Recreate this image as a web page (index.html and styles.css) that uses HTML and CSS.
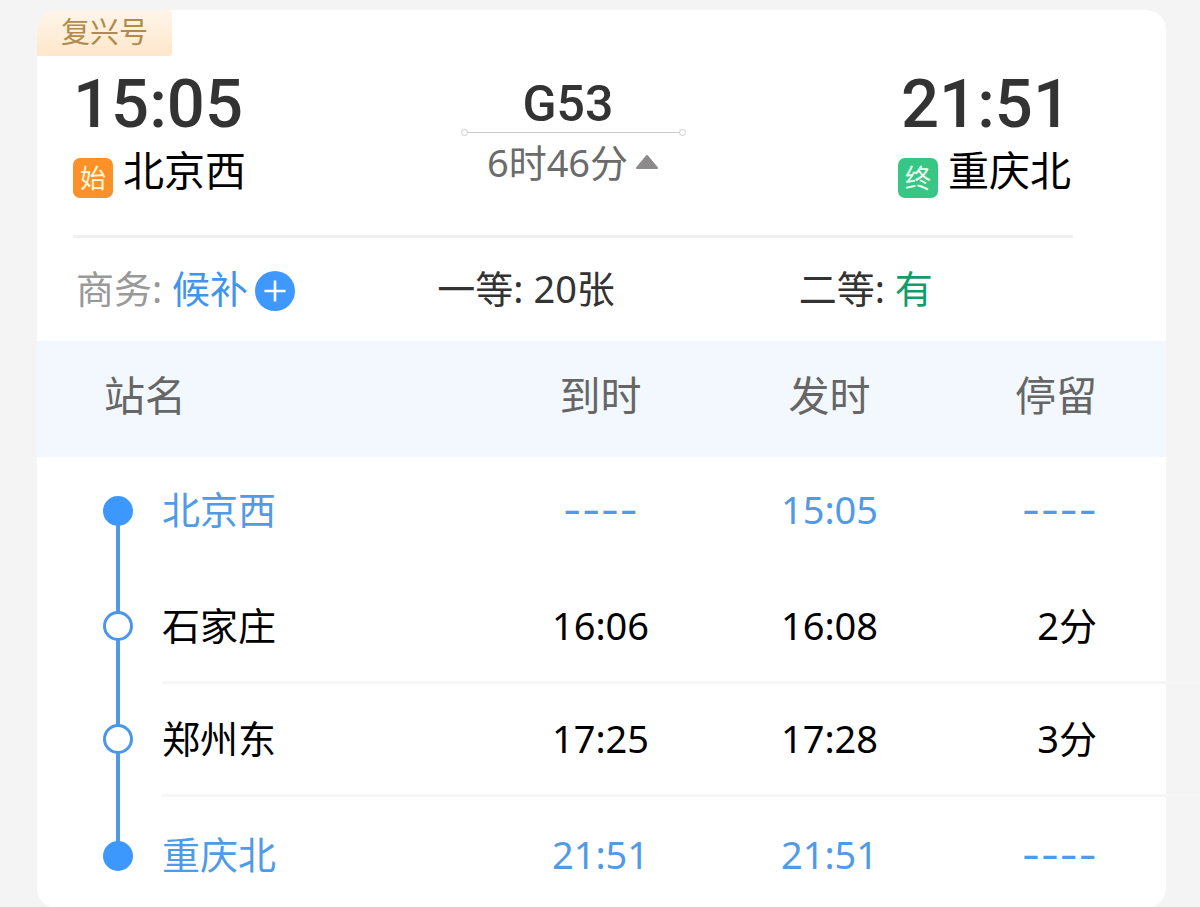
FILE: index.html
```html
<!DOCTYPE html>
<html lang="zh-CN">

<head>
    <meta charset="UTF-8">
    <meta name="viewport" content="width=device-width, initial-scale=1">
    <title>G53 北京西 - 重庆北</title>
    <link rel="stylesheet" href="styles.css">
</head>

<body>
    <div class="card">
        <div class="tag">复兴号</div>

        <!-- 车次信息 -->
        <div class="trip">
            <div class="end">
                <div class="time">15:05</div>
                <div class="station">
                    <span class="badge start">始</span>
                    <span class="city">北京西</span>
                </div>
            </div>
            <div class="middle">
                <div class="number">G53</div>
                <div class="rule"><i></i><b></b><i></i></div>
                <button class="duration" type="button" aria-expanded="true">
                    6时46分
                    <svg width="24" height="16" viewBox="0 0 24 16" aria-hidden="true">
                        <path d="M12 2 L22 14 H2 Z" fill="#8c8a8b" stroke="#8c8a8b" stroke-width="2" stroke-linejoin="round" />
                    </svg>
                </button>
            </div>
            <div class="end right">
                <div class="time">21:51</div>
                <div class="station">
                    <span class="badge final">终</span>
                    <span class="city">重庆北</span>
                </div>
            </div>
        </div>

        <!-- 余票 -->
        <div class="seats">
            <div class="seat none">
                <span>商务: <a class="wait" href="#">候补</a></span>
                <button class="add" type="button" aria-label="候补">
                    <svg width="40" height="40" viewBox="0 0 40 40" aria-hidden="true">
                        <circle cx="20" cy="20" r="20" fill="#3f98fe" />
                        <path d="M20 9.5 V30.5 M9.5 20 H30.5" stroke="#fff" stroke-width="2.6" />
                    </svg>
                </button>
            </div>
            <div class="seat">一等: 20张</div>
            <div class="seat"><span>二等: <span class="has">有</span></span></div>
        </div>

        <!-- 经停站 -->
        <table class="stops">
            <colgroup>
                <col class="col-rail">
                <col>
                <col class="col-time">
                <col class="col-time">
                <col class="col-stay">
            </colgroup>
            <thead>
                <tr>
                    <th class="name" colspan="2">站名</th>
                    <th>到时</th>
                    <th>发时</th>
                    <th class="stay">停留</th>
                </tr>
            </thead>
            <tbody>
                <tr class="first">
                    <td class="rail"><span class="dot"></span></td>
                    <td class="name">北京西</td>
                    <td><span class="dash">----</span></td>
                    <td>15:05</td>
                    <td class="stay"><span class="dash">----</span></td>
                </tr>
                <tr class="pass">
                    <td class="rail"><span class="dot"></span></td>
                    <td class="name">石家庄</td>
                    <td>16:06</td>
                    <td>16:08</td>
                    <td class="stay">2分</td>
                </tr>
                <tr class="pass">
                    <td class="rail"><span class="dot"></span></td>
                    <td class="name">郑州东</td>
                    <td>17:25</td>
                    <td>17:28</td>
                    <td class="stay">3分</td>
                </tr>
                <tr class="last">
                    <td class="rail"><span class="dot"></span></td>
                    <td class="name">重庆北</td>
                    <td>21:51</td>
                    <td>21:51</td>
                    <td class="stay"><span class="dash">----</span></td>
                </tr>
            </tbody>
        </table>
    </div>
</body>

</html>
```

FILE: styles.css
```css
* {
    padding: 0;
    margin: 0;
    box-sizing: border-box;
}

body {
    padding: 10px 34px 0 37px;
    background: #f4f4f4;
    color: #333;
    font-family: "Noto Sans", "Noto Sans CJK SC", sans-serif;
    font-size: 38px;
    line-height: 44px;
}

button {
    border: 0;
    background: none;
    font: inherit;
    color: inherit;
    cursor: pointer;
}

a {
    text-decoration: none;
}

svg {
    display: block;
}

.card {
    background: #fff;
    border-radius: 20px;
}

.tag {
    width: 135px;
    height: 46px;
    border-radius: 20px 4px 4px 0;
    background: linear-gradient(#fff5ea, #fee7ca);
    color: #b08a4e;
    font-size: 29px;
    text-align: center;
}

/* 车次信息 */
.trip {
    display: grid;
    grid-template-columns: 1fr 225px 1fr;
    margin: 0 93px 0 36px;
    padding: 15px 0 37px;
    border-bottom: 3px solid #f0f0f0;
}

.end {
    display: flex;
    flex-direction: column;
    align-items: flex-start;
    gap: 11px;
}

.right {
    align-items: flex-end;
    padding-right: 2px;
}

.time,
.number {
    font-family: Roboto, sans-serif;
    font-weight: 500;
}

.time {
    font-size: 67px;
    line-height: 66px;
}

.station {
    display: flex;
    gap: 10px;
    height: 50px;
}

.city {
    color: #000;
    font-size: 41px;
}

.badge {
    align-self: flex-end;
    width: 40px;
    height: 40px;
    border-radius: 7px;
    font-size: 26px;
    line-height: 40px;
    text-align: center;
}

.start {
    background: #fb9128;
    color: #fff6dc;
}

.final {
    background: #37c684;
    color: #f0fff4;
}

.middle {
    padding-top: 9px;
    text-align: center;
}

.number {
    padding-right: 10px;
    font-size: 50px;
    line-height: 48px;
}

.rule {
    display: flex;
    align-items: center;
    height: 8px;
}

.rule i {
    width: 7px;
    height: 7px;
    border: 1px solid #ccc;
    border-radius: 50%;
}

.rule b {
    flex: 1;
    height: 1px;
    background: #ccc;
}

.duration {
    display: flex;
    align-items: center;
    justify-content: center;
    gap: 7px;
    width: 100%;
    margin-top: 4px;
    color: #6b6b6b;
}

/* 余票 */
.seats {
    display: grid;
    grid-template-columns: repeat(3, 1fr);
    padding: 28px 6px 30px 39px;
}

.seat {
    display: flex;
    align-items: flex-start;
    gap: 7px;
}

.none {
    color: #999;
}

.wait {
    color: #3f94ee;
}

.add {
    height: 40px;
    margin-top: 5px;
}

.has {
    color: #139c6b;
}

/* 经停站 */
.stops {
    width: 100%;
    table-layout: fixed;
    border-spacing: 0;
    color: #000;
}

.col-rail {
    width: 125px;
}

.col-time {
    width: 229px;
}

.col-stay {
    width: 222px;
}

.stops th {
    height: 116px;
    padding-bottom: 8px;
    background: #f3f8fe;
    color: #666;
    font-size: 41px;
    font-weight: 400;
}

.stops td {
    height: 113px;
    padding-bottom: 3px;
    text-align: center;
}

.stops .name {
    text-align: left;
}

.stops th.name {
    padding-left: 67px;
}

.stops .stay {
    position: relative;
    padding-right: 69px;
    text-align: right;
}

.first,
.last {
    color: #4f9be8;
}

.stops .first td {
    height: 114px;
    padding-bottom: 10px;
}

.stops .last td {
    height: 111px;
    padding-top: 6px;
}

.pass td {
    border-bottom: 3px solid #f6f6f6;
}

/* 分隔线一直延伸到页面右边 */
.pass .stay::after {
    content: "";
    position: absolute;
    right: -34px;
    bottom: -3px;
    width: 34px;
    height: 3px;
    background: #f6f6f6;
}

.dash {
    font-family: Inter, sans-serif;
    font-size: 41px;
    vertical-align: -2px;
}

.stops .rail {
    position: relative;
    padding-bottom: 0;
    border-bottom-color: transparent;
}

.stops .first .rail {
    padding-bottom: 6px;
}

.rail::before {
    content: "";
    position: absolute;
    top: 0;
    bottom: -3px;
    left: 79px;
    width: 4px;
    background: #5199e4;
}

.first .rail::before {
    top: 50%;
}

.last .rail::before {
    bottom: 50%;
}

.dot {
    position: relative;
    display: block;
    width: 30px;
    height: 30px;
    margin-left: 66px;
    border: 3px solid #4a97ea;
    border-radius: 50%;
    background: #fff;
}

.first .dot,
.last .dot {
    border-color: #3d98fd;
    background: #3d98fd;
}
```
